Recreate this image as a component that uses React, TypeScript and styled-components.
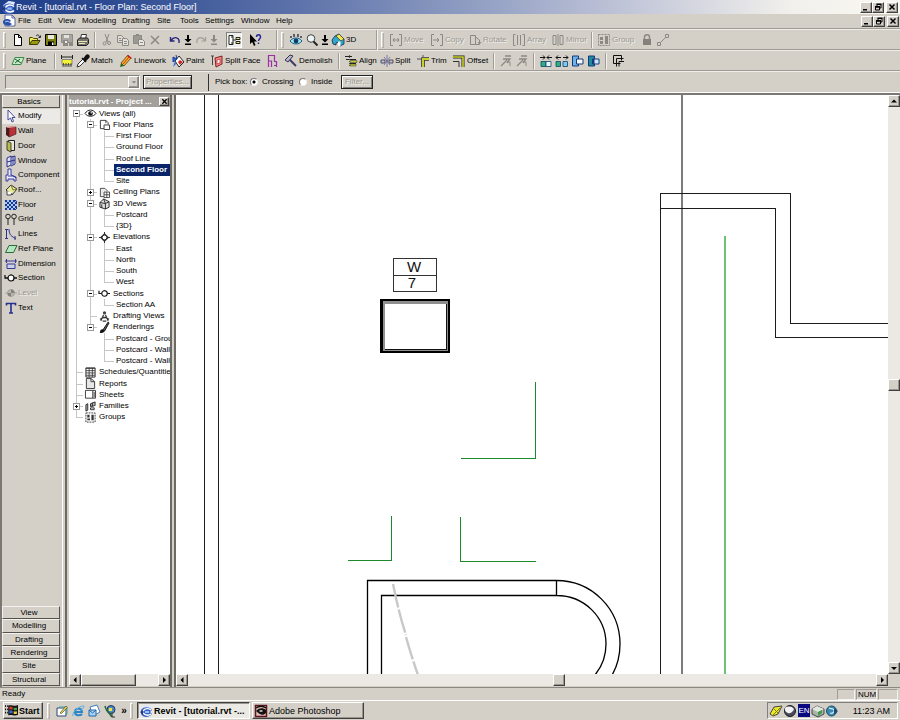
import React from "react";
import styled, { createGlobalStyle, css } from "styled-components";

const Global = createGlobalStyle`
  * { box-sizing: border-box; }
  html, body, #root { height: 100%; }
  body { margin: 0; overflow: hidden; background: #d4d0c8; }
  body, button, input, select {
    font-family: "Liberation Sans", Arial, sans-serif;
    font-size: 8px;
    line-height: 10px;
    color: #000;
  }
  button { border: 0; padding: 0; margin: 0; background: none; white-space: nowrap; }
  ul { list-style: none; margin: 0; padding: 0; }
`;

const raised = css`
  background: #d4d0c8;
  border: 1px solid;
  border-color: #fff #404040 #404040 #fff;
  box-shadow: inset -1px -1px 0 #9a968e;
`;

const sunken = css`
  border: 1px solid;
  border-color: #808080 #fff #fff #808080;
`;

/* ---------- icons ---------- */

const Glyph = styled.svg<{ $s: number }>`
  flex: none;
  display: block;
  width: ${(p) => p.$s}px;
  height: ${(p) => p.$s}px;
  overflow: visible;
`;

const G = "#8c8984";

const drawings: Record<string, React.ReactNode> = {
  revit: (
    <>
      <path d="M1 4 6 0l6 1-1 3-5-1-3 3z" fill="#dfe9fb" />
      <path d="M1 5c3-4 9-3 11 0l-2 2 2 2c-3 4-9 4-11 0z" fill="#3f63c8" />
      <path d="M3 6c2-3 6-3 8-1M3 8c2 2 5 3 8 1" stroke="#fff" strokeWidth="1.4" fill="none" />
      <path d="M5 6h4v2H5z" fill="#8ec5f4" />
      <path d="M0 7 3 5v5z" fill="#26357e" />
    </>
  ),
  doc: (
    <>
      <path d="M2 0h7l3 3v8H2z" fill="#fff" stroke="#55659a" />
      <path d="M9 0v3h3" fill="none" stroke="#55659a" />
      <path d="M0 6c3-3 7-2 8 0L6 7l3 2c-3 3-7 2-9-1z" fill="#2c50a8" />
      <path d="M2 7c1-1 3-1 4 0" stroke="#a8d4fa" fill="none" />
    </>
  ),
  new: <path d="M2.500.500h4l3 3v8h-7zM6.500.500v3h3" fill="#fff" stroke="#000" />,
  open: (
    <>
      <path d="M.5 10.500v-7h3l1 1h4v2" fill="#f2ec52" stroke="#4a4a00" />
      <path d="m.5 10.500 2.500-4h8l-2.500 4z" fill="#9a9a12" stroke="#3c3c00" />
      <path d="M7 2c1-1.500 3-1.500 3.500 1M11.500 1.500v2h-2" fill="none" stroke="#222" />
    </>
  ),
  save: (
    <>
      <path d="M.5.5h11v11h-11z" fill="#7c8010" stroke="#000" />
      <path d="M3 1h6v4H3z" fill="#e8e8e0" />
      <path d="M3 7.500h6v4H3z" fill="#000" />
      <path d="M7 8.500h1.500v2.500H7z" fill="#fff" />
    </>
  ),
  saveAll: (
    <>
      <path d="M.5.5h11v8h-11z" fill="#a9a6a1" stroke={G} />
      <path d="M3 1h5v3H3z" fill="#e4e2dd" />
      <path d="M2 6h5v6H2zM8 8h4v4H8z" fill={G} />
      <path d="M4 7h2v2H4z" fill="#eee" />
    </>
  ),
  print: (
    <>
      <path d="m3.500 4.500 1-4h5l-1 4" fill="#fff" stroke="#333" />
      <path d="m.5 6 2-2h8l1 1.500v4l-2 2h-9z" fill="#77746e" stroke="#222" />
      <path d="M1 7.500h9M2 9.500h6" stroke="#e7e4b6" />
    </>
  ),
  cut: (
    <path d="m4 0 3 8M8 0 5 8M3.500 8a1.500 1.500 0 1 0 .1 3 1.500 1.500 0 0 0 0-3zM8 7.500a1.500 1.500 0 1 0 .1 3 1.500 1.500 0 0 0 0-3z" fill="none" stroke={G} />
  ),
  copy: (
    <>
      <path d="M.5 1.500h4l2 2v5h-6z" fill="#dedbd5" stroke={G} />
      <path d="M5.500 4.500h4l2 2v5h-6zM7 7.500h3M7 9.500h3M2 4.500h2M2 6.500h3" fill="#e4e2dc" stroke={G} />
    </>
  ),
  paste: (
    <>
      <path d="M.5 1.500h8v8h-8z" fill="#9c9993" stroke={G} />
      <path d="M3 0h3v2H3z" fill={G} />
      <path d="M5.500 5.500h4l2 2v4h-6zM7 8.500h3" fill="#e8e6e1" stroke={G} />
    </>
  ),
  cross: <path d="m2 2 8 8M10 2l-8 8" stroke={G} strokeWidth="1.500" />,
  undo: <path d="M1.500 3v4h4M2 6.500C5 2 11 3 10 9" fill="none" stroke="#26267c" strokeWidth="1.400" />,
  redo: <path d="M10.500 3v4h-4M10 6.500C7 2 1 3 2 9" fill="none" stroke="#a09d98" strokeWidth="1.200" />,
  down: <path d="M5 1h2v4h2.500L6 8.500 2.500 5H5zM3 9.500h6V11H3z" fill="#000" />,
  downOff: <path d="M5 1h2v4h2.500L6 8.500 2.500 5H5zM3 9.500h6V11H3z" fill={G} />,
  browser: (
    <>
      <path d="M1 1.500h4v9H1z" fill="#fff" stroke="#222" />
      <path d="M5 6h3M3 3h2M3 9h2" stroke="#222" />
      <path d="M8 3.500h4v2H8zM8 7.500h4v2H8z" fill="#e5e884" stroke="#222" />
    </>
  ),
  help: (
    <>
      <path d="M1 0v10l2.200-2L5 12l1.500-1L5 7.500h3z" fill="#000" />
      <path d="M7.500 3c0-3 4-3 4 0 0 2-2 2-2 4M9.500 8.500v1.500" fill="none" stroke="#28289a" strokeWidth="1.500" />
    </>
  ),
  eye: (
    <>
      <path d="M0 7c3-4 9-4 12 0-3 4-9 4-12 0z" fill="#a8e0ee" stroke="#146083" />
      <circle cx="6" cy="7" r="2.400" fill="#0c3d68" />
      <path d="M1 2v2M4 0v3M8 0v3M11 2v2" stroke="#113" strokeWidth="1.200" />
    </>
  ),
  zoom: (
    <>
      <circle cx="5" cy="4.500" r="3.800" fill="#e8f4f6" stroke="#444" />
      <path d="m7.500 7.500 4 4" stroke="#222" strokeWidth="2" />
    </>
  ),
  house: (
    <>
      <path d="m0 6 3-4 4-2 5 5v5l-4 2-1-4-3 1v2l-3-1z" fill="#32a7c9" stroke="#124" strokeWidth=".8" />
      <path d="m4 2 3-2 5 5-3 2z" fill="#f2e94e" stroke="#333" strokeWidth=".7" />
      <path d="M6 7.500h2.500V12H6z" fill="#fff" />
    </>
  ),
  move: <path d="M3 .500H.500v11H3M9 .500h2.500v11H9M3 6h6M4.500 4 3 6l1.500 2M7.500 4 9 6 7.500 8" fill="none" stroke={G} />,
  copyEl: <path d="M3 .500H.500v11H3M9 .500h2.500v11H9M2 6h6M6 4l2 2-2 2" fill="none" stroke={G} />,
  rotate: <path d="M1.500 1.500h5v9h-5zM6.500 3l4 3v4.500h-9M9 8l1.500 2L12 8" fill="none" stroke={G} />,
  array: <path d="M2.500.500H.500v11h2M4.500 1v10M7.500 1v10M9.500.500h2v11h-2" fill="none" stroke={G} />,
  mirror: <path d="M1 1.500h3v9H1zM8 1.500h3v9H8zM6 0v12" fill="none" stroke={G} />,
  group: (
    <>
      <path d="M.500.500h11v11h-11z" fill="none" stroke={G} strokeDasharray="2 1" />
      <path d="M2 3h3v3H2zM2 7h3v3H2zM7 2h3v8H7z" fill={G} />
    </>
  ),
  lock: (
    <>
      <path d="M3.500 6V3c0-3 5-3 5 0v3" fill="none" stroke={G} strokeWidth="1.500" />
      <path d="M2 5h8v6H2z" fill="#85827d" />
    </>
  ),
  link: <path d="M.500 8.500h3v3h-3zM8.500.500h3v3h-3zM3.500 8.500 6 6l2.500-2.500" fill="none" stroke={G} />,
  plane: (
    <>
      <path d="M3 2.500h9l-3 7H0z" fill="#c4ecc9" stroke="#3d8a4b" />
      <path d="m3 4 6 4M8 4 3 8" stroke="#1c5a2c" />
    </>
  ),
  tape: (
    <>
      <path d="M1 4.500h10v5H1z" fill="#f3f13a" stroke="#666" strokeWidth=".7" />
      <path d="M.500 0v4M11.500 0v4M1 2h10" stroke="#222" fill="none" />
      <path d="M2.500 8v2.500M5 8v2.500M7.500 8v2.500M10 8v2.500M1 11h10" stroke="#333" strokeWidth=".8" />
    </>
  ),
  dropper: (
    <>
      <path d="m0 12 1-3 5-5 2 2-5 5z" fill="#fff" stroke="#333" />
      <path d="m5 3 4 4M7 4l2-3c2-2 4 0 2 2L9 5z" stroke="#111" strokeWidth="1.600" fill="#111" />
    </>
  ),
  pencil: (
    <>
      <path d="m1 8 7-8 3 3-7 8z" fill="#e9b42a" stroke="#6a3208" strokeWidth=".8" />
      <path d="m7 1 1-1 4 3-1 1z" fill="#c81e1e" />
      <path d="m1 8 3 3-4 1z" fill="#1b6b2a" />
      <path d="m3 9 6-7" stroke="#d2321a" />
    </>
  ),
  paint: (
    <>
      <path d="m3 6 4-5 5 6-5 5z" fill="#fff" stroke="#222" />
      <path d="M3 6 1 12l3-3z" fill="#2f6ad0" />
      <path d="M5 4 4 0M1 2l4 2-4 3z" stroke="#1f3a9a" fill="#2f6ad0" />
      <path d="m6 7 2-2 3 2-3 3z" fill="#cf2b2b" />
    </>
  ),
  splitFace: (
    <>
      <path d="m4 3 7-2v8l-6 3z" fill="#e88b8b" stroke="#8c1c1c" />
      <path d="M1.500 1v9M0 1h3" stroke="#444" />
      <path d="m6 5 3-1v4L6 9z" fill="#fff" stroke="#c33" strokeWidth=".8" />
    </>
  ),
  profile: <path d="M2.500 12V.500h6v6h2V12M2.500 6h3v6M8 10.500h3" fill="none" stroke="#9b2fa4" strokeWidth="1.200" />,
  hammer: (
    <>
      <path d="m4 4 7 7" stroke="#3b3b6a" strokeWidth="2" />
      <path d="M0 5 5 0l3 1-5 6z" fill="#b7b7d3" stroke="#334" />
    </>
  ),
  align: (
    <>
      <path d="M0 1.500h7M1 4.500h10M4 8.500h7" stroke="#222" />
      <path d="M5 5.500h7v2H5zM5 9h6v2H5z" fill="#c3c82c" stroke="#333" strokeWidth=".5" />
      <path d="M4.500 0v12" stroke="#555" strokeDasharray="1 1" />
    </>
  ),
  split: (
    <>
      <path d="M0 5h4v3H0zM8 5h4v3H8z" fill="#c4c0d8" stroke="#334" strokeWidth=".8" />
      <path d="M6 0v12M3 2l6 8M9 2l-6 8" stroke="#66649a" strokeWidth=".8" />
    </>
  ),
  trim: (
    <>
      <path d="M6 12V4h6" fill="none" stroke="#333" strokeWidth="3.600" />
      <path d="M6 12V4h6" fill="none" stroke="#c9d02a" strokeWidth="2" />
      <path d="M0 4h4M6 0v2" stroke="#556" />
    </>
  ),
  offset: (
    <>
      <path d="M0 2h10v10" fill="none" stroke="#222" strokeWidth="3" />
      <path d="M0 2h10v10" fill="none" stroke="#cdd32b" strokeWidth="1.600" />
      <path d="M0 6.500h6V12" fill="none" stroke="#333" />
    </>
  ),
  tool: (
    <>
      <path d="M1 11 7 5M5 1h6M3 4h7L7 8" stroke={G} strokeWidth="1.300" fill="none" />
      <path d="M7 7h3v4" stroke={G} fill="none" />
    </>
  ),
  joinA: (
    <>
      <path d="M0 2.500h5M7 2.500h5M3 .500l2 2-2 2M9 .500l-2 2 2 2" stroke="#111" fill="none" />
      <path d="M1 6.500h5v5H1z" fill="#2fae83" stroke="#146" strokeWidth=".8" />
      <path d="M6 6.500h5v5H6z" fill="#eaf6ff" stroke="#146" strokeWidth=".8" />
    </>
  ),
  joinB: (
    <>
      <path d="M0 2.500h5M7 2.500h5M2 .500l-2 2 2 2M10 .500l2 2-2 2" stroke="#111" fill="none" />
      <path d="M0 6.500h4.500v5H0z" fill="#2fae83" stroke="#146" strokeWidth=".8" />
      <path d="M7 6.500h4.500v5H7z" fill="#7fc7f4" stroke="#146" strokeWidth=".8" />
    </>
  ),
  cutA: (
    <>
      <path d="M.500 1h6v10h-6z" fill="#6fb4e8" stroke="#123a7c" />
      <path d="M4.500 4H11v5H4.500z" fill="#f4f8fc" stroke="#123a7c" />
    </>
  ),
  cutB: (
    <>
      <path d="M.500 1h6v10h-6z" fill="#1f8a9a" stroke="#123a7c" />
      <path d="M4.500 4H11v5H4.500z" fill="#cfe6fa" stroke="#123a7c" />
      <path d="M4.500 4h2v5h-2z" fill="#123a7c" />
    </>
  ),
  layers: <path d="M8.500 8.500h-7v-8h8v5M4.500 11.500v-8h7M7 11.500V6.500h5" fill="none" stroke="#111" />,
  arrow: <path d="M3 0v10l2.500-2 1.500 4 1.500-.700L7 7.500h3z" fill="#fff" stroke="#333a94" strokeWidth=".9" />,
  wall: (
    <>
      <path d="m1 2 3 1v9L1 10z" fill="#4b1a20" />
      <path d="m4 3 7-1v7l-7 3z" fill="#b8323a" stroke="#4b1a20" strokeWidth=".7" />
      <path d="m1 2 6-1 4 1-7 1z" fill="#e28888" />
    </>
  ),
  door: (
    <>
      <path d="M3.500.500h6v10h-6z" fill="#e9e7e0" stroke="#222" />
      <path d="m2 1 4 2v9l-4-2z" fill="#b9bd40" stroke="#222" strokeWidth=".8" />
    </>
  ),
  window: <path d="m2 3 4-2v9l-4 2zM6 2l4-1v8l-4 2M2 7l8-2M8 1.500v8" fill="#dfe3fa" stroke="#2b2f86" />,
  component: (
    <>
      <path d="M3 0h3v6l5 2v4H9v-2H3v2H1V6h2z" fill="#eef" stroke="#34389a" />
      <path d="M3 7h5l3 2" fill="none" stroke="#34389a" />
    </>
  ),
  roof: (
    <>
      <path d="m1 6 5-5 6 4-5 6z" fill="#e8e9a0" stroke="#333" />
      <path d="M2 7v4h4l1-2" fill="#fff" stroke="#444" />
      <path d="m6 1 2 5 4-1" fill="none" stroke="#7b7b22" />
    </>
  ),
  floor: (
    <>
      <path d="M0 1h12v10H0z" fill="#173a91" />
      <path d="m0 5 4-4M0 9l8-8M2 11 12 1M6 11l6-6M0 7l4 4M0 3l8 8M2 1l10 10M6 1l6 6" stroke="#a9c8f8" />
    </>
  ),
  grid: (
    <>
      <circle cx="3" cy="3.500" r="2.300" fill="none" stroke="#222" />
      <circle cx="9" cy="3.500" r="2.300" fill="none" stroke="#222" />
      <path d="M3 6v6M9 6v6" stroke="#222" />
    </>
  ),
  lines: <path d="M1.500 1v10M0 1.500h3M0 10.500h3M4 1c0 6 3 8 7 9.500M10 8v4" fill="none" stroke="#2f338c" />,
  refPlane: <path d="M4 2.500h8l-3.500 7H.500z" fill="#b2e6bc" stroke="#2b6b3a" />,
  dimension: (
    <>
      <path d="M0 3h12M1.500 1v4M10.500 1v4" stroke="#333a94" />
      <path d="M2 6h8v4.500H2z" fill="#cfd1ec" stroke="#333a94" />
    </>
  ),
  section: (
    <>
      <path d="M0 3v3h3M9 6h3" fill="none" stroke="#111" strokeWidth="1.300" />
      <path d="m2 6 4-4 4 4z" fill="#444" />
      <circle cx="6" cy="6" r="3" fill="#fff" stroke="#111" strokeWidth="1.200" />
    </>
  ),
  level: (
    <>
      <path d="M0 6h3M9 6h3" stroke="#a7a49f" />
      <circle cx="6" cy="6" r="3.500" fill="#bab7b2" stroke="#a7a49f" />
      <path d="M6 2.500V6h3.500A3.500 3.500 0 0 0 6 2.500zM6 9.500V6H2.500A3.500 3.500 0 0 0 6 9.500z" fill="#85827d" />
    </>
  ),
  text: <path d="M1.500 3.500v-2h9v2M6 1.500v9.500M4 11h4" fill="none" stroke="#26308f" strokeWidth="1.600" />,
  views: (
    <>
      <path d="M0 6c3-5 9-5 12 0-3 4-9 4-12 0z" fill="#fff" stroke="#111" />
      <circle cx="6" cy="6" r="2.500" fill="#111" />
      <circle cx="6.800" cy="5.200" r=".8" fill="#fff" />
    </>
  ),
  plan: <path d="M5.500 10.500H1.500v-9h6v3M5.500 6.500h6v5h-6zM7.500 1.500 10 4v2" fill="none" stroke="#333" />,
  ceiling: (
    <>
      <path d="M1.500 10.500v-9h5l3 3" fill="#eee" stroke="#444" />
      <path d="M5.500 5.500h6v6h-6zM5.500 8.500h6M8.500 5.500v6M1.500 10.500h4" fill="none" stroke="#444" />
    </>
  ),
  home3d: (
    <>
      <path d="m1 5 4-4 6 3v6l-4 2-6-2z" fill="#ddd" stroke="#222" />
      <path d="m5 1 2 5 4-2M7 6v6M1 5l6 1M3 7v4" stroke="#222" fill="none" />
    </>
  ),
  elevation: (
    <>
      <path d="M6 0v12M0 6h12" stroke="#222" />
      <path d="m6 1 5 5-5 5-5-5z" fill="#333" />
      <circle cx="6" cy="6" r="2.600" fill="#fff" stroke="#222" />
    </>
  ),
  drafting: (
    <>
      <circle cx="6" cy="2" r="1.800" fill="#444" />
      <path d="M5 4 2 11M7 4l3 7M3 7h6M1 9c3-2 7-2 10 0M4 11h4" fill="none" stroke="#333" strokeWidth="1.200" />
    </>
  ),
  brush: (
    <>
      <path d="m4 9 6-9 1 1-5 9z" fill="#555" stroke="#111" />
      <path d="M1 12c0-3 1-4 3-4l2 2c-1 2-3 2-5 2z" fill="#111" />
    </>
  ),
  schedule: (
    <>
      <path d="M1 1h10v10H1z" fill="#fff" stroke="#222" />
      <path d="M1 1.500h10M1 4h10M1 6.500h10M1 9h10M4.500 1v10M8 1v10" stroke="#333" strokeWidth=".9" />
    </>
  ),
  report: <path d="M1.500.500h5l4 3.500v7.500h-9zM6.500.500V4h4" fill="#e6e6e6" stroke="#333" />,
  sheet: <path d="M.500 1.500h11v8.500H.500zM8.500 1.500V10M10 3v6" fill="#fff" stroke="#333" />,
  family: (
    <>
      <path d="m1 4 2-1v7l-2 1zM6 3l5-2v4L6 6z" fill="#bbb" stroke="#222" />
      <path d="M6 7.500h4v2H6zM8 2v4" fill="#fff" stroke="#222" />
    </>
  ),
  groups: (
    <>
      <path d="M1 1h10v10H1z" fill="none" stroke="#333" strokeDasharray="2 1" />
      <path d="M2.500 3h2.500v3H2.500zM2.500 7h3v2h-3zM7 3h2.500v6H7z" fill="#333" />
    </>
  ),
  flag: (
    <>
      <path d="M0 2h3M0 5h3M0 8h3" stroke="#111" strokeDasharray="1 1" strokeWidth="1.500" />
      <path d="M3 1.500C5 0 9 3 12 1v9c-3 2-6-1-9 .500z" fill="#111" />
      <path d="M4 2.500c1-.500 2 0 3 .500v2.200C6 5 5 4.500 4 5z" fill="#e33a2c" />
      <path d="M8 3.200c1 .300 2 .300 3 0v2.300c-1 .300-2 .300-3 0z" fill="#3aa84a" />
      <path d="M4 6c1-.500 2 0 3 .500v2.400c-1-.500-2-.500-3 0z" fill="#3567d6" />
      <path d="M8 6.800c1 .300 2 .300 3 0v2.300c-1 .300-2 .300-3 0z" fill="#f0cf2f" />
    </>
  ),
  desktop: (
    <>
      <path d="M1 3h9v8H1z" fill="#fff" stroke="#347" />
      <path d="M3 2h8v7H9" fill="none" stroke="#49a3a0" />
      <path d="m4 8 6-7 1.500 1.500-6 6z" fill="#e4d05a" stroke="#552" strokeWidth=".7" />
    </>
  ),
  ie: (
    <>
      <path d="M10 7H3c0-4 6-5 7 0zM3 7c0 4 5 4 7 2" fill="none" stroke="#2a86c9" strokeWidth="2" />
      <path d="M1 11C-1 8 8 0 12 1c0 2-2 3-4 5" fill="none" stroke="#58b2e4" />
    </>
  ),
  mail: (
    <>
      <path d="M2 2 9 0l3 7-7 4z" fill="#fff" stroke="#3b7fc4" />
      <path d="M1 5h7v6H1z" fill="#a8d4f4" stroke="#2a65aa" />
      <path d="m1 5 3.500 3L8 5" fill="none" stroke="#2a65aa" />
    </>
  ),
  media: (
    <>
      <circle cx="7" cy="4.500" r="4" fill="#4a8ac8" stroke="#235" />
      <path d="M5 3h3v3H5z" fill="#f4e13a" />
      <path d="M1 1c1 3 1 5 4 7M5 8l3 4" stroke="#2a6a3a" strokeWidth="1.600" fill="none" />
      <path d="M8 8v4h3" fill="none" stroke="#333" />
    </>
  ),
  photoshop: (
    <>
      <path d="M.500.500h11v11H.500z" fill="#e2bcb4" stroke="#5c1420" strokeWidth="1.500" />
      <path d="M1 6c2-3 7-4 10-1v3c-3 3-6 2-10-2z" fill="#111" />
      <path d="M4 6c1-1 3-1 4 0-1 1-3 1-4 0z" fill="#fff" />
      <path d="M1 3c3-2 7-2 10 0" stroke="#111" strokeWidth="1.500" fill="none" />
    </>
  ),
  wand: (
    <>
      <path d="m0 9 4-7 8-1-4 8-5 2z" fill="#f0e92a" stroke="#444" />
      <path d="m2 11 8-8M4 4l4 4" stroke="#7a7a12" />
    </>
  ),
  ball: (
    <>
      <circle cx="6" cy="6" r="5.500" fill="#4a4a5c" stroke="#222" />
      <path d="M2 2c3-1 6-1 8 2-1 3-4 5-6 4-3-1-4-4-2-6z" fill="#f2f2f8" />
    </>
  ),
  box: (
    <>
      <path d="m0 4 5-3 7 3v5l-6 3-6-3z" fill="#a9b5a6" stroke="#445" />
      <path d="m0 4 6 3 6-3-7-3z" fill="#dfe9dd" />
      <path d="m6 7 4-2v3l-4 3z" fill="#3f9b4a" />
    </>
  ),
  globe: (
    <>
      <circle cx="5.500" cy="6" r="5" fill="#3d88ae" stroke="#134a68" />
      <path d="M3 3c2 1 4 0 5 2s-2 4-4 3" fill="none" stroke="#c6ecf8" strokeWidth="1.300" />
      <path d="m8 3 4 3-4 4z" fill="#1d4a78" />
    </>
  ),
};

const Icon = ({ name, size = 12 }: { name: string; size?: number }) => (
  <Glyph viewBox="0 0 12 12" $s={size} aria-hidden="true">
    {drawings[name]}
  </Glyph>
);

/* ---------- window frame ---------- */

const Desktop = styled.div`
  display: flex;
  flex-direction: column;
  height: 100vh;
  background: #d4d0c8;
`;

const TitleBar = styled.header`
  display: flex;
  align-items: center;
  flex: none;
  height: 14px;
  padding: 0 2px;
  gap: 1px;
  color: #fff;
  background: linear-gradient(90deg, #203f8a 0%, #2d4b92 12%, #5a70a8 32%, #8f9dc2 52%, #bcc1d6 68%, #f2f0ec 88%, #faf8f2 100%);
`;

const Title = styled.h1`
  flex: 1;
  margin: 0;
  font-size: 9px;
  line-height: 12px;
  font-weight: 400;
`;

const Caption = styled.div`
  display: flex;
  margin-left: auto;
`;

const CaptionButton = styled.button<{ $apart?: boolean }>`
  ${raised}
  display: grid;
  place-items: center;
  width: 12px;
  height: 11px;
  margin-left: ${(p) => (p.$apart ? 2 : 0)}px;
`;

const WindowButtons = ({ scope }: { scope: string }) => (
  <Caption>
    <CaptionButton aria-label={`Minimize ${scope}`}>
      <Glyph viewBox="0 0 8 8" $s={8}><path d="M1 6h4v1.500H1z" /></Glyph>
    </CaptionButton>
    <CaptionButton aria-label={`Restore ${scope}`}>
      <Glyph viewBox="0 0 8 8" $s={8}>
        <path d="M3 3V1.500h4V5H5.500M1.500 4h4v3h-4z" fill="none" stroke="#000" />
        <path d="M2.500.500h5v1.500h-5zM1 3h5v1.500H1z" />
      </Glyph>
    </CaptionButton>
    <CaptionButton $apart aria-label={`Close ${scope}`}>
      <Glyph viewBox="0 0 8 8" $s={8}><path d="m1.500 1.500 5 5M6.500 1.500l-5 5" stroke="#000" strokeWidth="1.500" /></Glyph>
    </CaptionButton>
  </Caption>
);

const MenuBar = styled.nav`
  display: flex;
  align-items: center;
  flex: none;
  height: 15px;
  padding: 0 1px 0 3px;
  border-bottom: 1px solid #a09c95;
`;

const MenuItem = styled.button<{ $w: number }>`
  width: ${(p) => p.$w}px;
  text-align: left;
`;

const MenuIcon = styled.span`
  width: 15px;
`;

const Toolbar = styled.div`
  display: flex;
  align-items: center;
  flex: none;
  height: 21px;
  padding-left: 3px;
  border-top: 1px solid #efede8;
  border-bottom: 1px solid #a09c95;
`;

const Grip = styled.span`
  flex: none;
  width: 3px;
  height: 16px;
  margin-right: 4px;
  border: 1px solid;
  border-color: #fff #b4b0a8 #b4b0a8 #fff;
`;

const Divider = styled.span<{ $end?: boolean }>`
  flex: none;
  width: 2px;
  height: ${(p) => (p.$end ? 20 : 16)}px;
  margin: 0 3px;
  border-left: 1px solid #a09c95;
  border-right: 1px solid #f4f2ee;
`;

const ToolButton = styled.button<{ $w: number; $pressed?: boolean }>`
  display: flex;
  align-items: center;
  flex: none;
  gap: 2px;
  width: ${(p) => p.$w}px;
  height: 16px;
  padding: 0 2px;
  &:disabled { color: #9a9791; text-shadow: 1px 1px 0 #f2f0ec; }
  ${(p) => p.$pressed && css`
    ${sunken}
    padding: 0 1px;
    background: #efeeea;
  `}
`;

type Tool = { icon?: string; label?: string; name?: string; w: number; off?: boolean; pressed?: boolean; kind?: "divider" | "end" | "grip" | "gap" };

const Gap = styled.span<{ $w: number }>`
  flex: none;
  width: ${(p) => p.$w}px;
`;

const standardTools: Tool[] = [
  { kind: "grip", w: 0 },
  { icon: "new", name: "New", w: 17 }, { icon: "open", name: "Open", w: 16 }, { icon: "save", name: "Save", w: 16 },
  { icon: "saveAll", name: "Save to central", w: 16, off: true }, { icon: "print", name: "Print", w: 16 },
  { kind: "divider", w: 0 },
  { icon: "cut", name: "Cut", w: 16, off: true }, { icon: "copy", name: "Copy to clipboard", w: 16, off: true },
  { icon: "paste", name: "Paste", w: 16, off: true }, { icon: "cross", name: "Delete", w: 16, off: true },
  { kind: "gap", w: 4 },
  { icon: "undo", name: "Undo", w: 13 }, { icon: "down", name: "Undo list", w: 13 },
  { icon: "redo", name: "Redo", w: 13, off: true }, { icon: "downOff", name: "Redo list", w: 14, off: true },
  { kind: "gap", w: 6 },
  { icon: "browser", name: "Project browser", w: 16, pressed: true },
  { kind: "gap", w: 5 },
  { icon: "help", name: "What's this", w: 23 },
  { kind: "gap", w: 3 },
  { kind: "end", w: 0 }, { kind: "grip", w: 0 },
  { icon: "eye", name: "View", w: 16 }, { icon: "zoom", name: "Zoom", w: 13 }, { icon: "down", name: "Zoom list", w: 13 },
  { icon: "house", label: "3D", w: 34 },
  { kind: "gap", w: 9 },
  { kind: "end", w: 0 }, { kind: "grip", w: 0 },
  { icon: "move", label: "Move", w: 41, off: true }, { icon: "copyEl", label: "Copy", w: 38, off: true },
  { icon: "rotate", label: "Rotate", w: 44, off: true }, { icon: "array", label: "Array", w: 39, off: true },
  { icon: "mirror", label: "Mirror", w: 38, off: true },
  { kind: "divider", w: 0 },
  { icon: "group", label: "Group", w: 43, off: true }, { icon: "lock", name: "Lock", w: 16, off: true },
  { icon: "link", name: "Link", w: 16, off: true },
];

const editTools: Tool[] = [
  { kind: "grip", w: 0 },
  { icon: "plane", label: "Plane", w: 41 },
  { kind: "divider", w: 0 },
  { icon: "tape", name: "Measure", w: 16 }, { icon: "dropper", label: "Match", w: 43 },
  { icon: "pencil", label: "Linework", w: 52 }, { icon: "paint", label: "Paint", w: 39 },
  { icon: "splitFace", label: "Split Face", w: 55 }, { icon: "profile", name: "Edit profile", w: 19 },
  { icon: "hammer", label: "Demolish", w: 52 },
  { kind: "divider", w: 0 },
  { icon: "align", label: "Align", w: 36 }, { icon: "split", label: "Split", w: 36 },
  { icon: "trim", label: "Trim", w: 36 }, { icon: "offset", label: "Offset", w: 39 },
  { kind: "divider", w: 0 },
  { icon: "tool", name: "Attach", w: 16, off: true }, { icon: "tool", name: "Detach", w: 16, off: true },
  { kind: "divider", w: 0 },
  { icon: "joinA", name: "Join", w: 16 }, { icon: "joinB", name: "Unjoin", w: 16 },
  { icon: "cutA", name: "Cut geometry", w: 16 }, { icon: "cutB", name: "Uncut geometry", w: 16 },
  { kind: "divider", w: 0 },
  { icon: "layers", name: "Join roofs", w: 16 },
];

const Tools = ({ label, items }: { label: string; items: Tool[] }) => (
  <Toolbar role="toolbar" aria-label={label}>
    {items.map((t, i) => {
      if (t.kind === "grip") return <Grip key={i} />;
      if (t.kind === "divider") return <Divider key={i} />;
      if (t.kind === "end") return <Divider key={i} $end />;
      if (t.kind === "gap") return <Gap key={i} $w={t.w} />;
      return (
        <ToolButton key={i} $w={t.w} $pressed={t.pressed} disabled={t.off} aria-label={t.label ? undefined : t.name}>
          {t.icon && <Icon name={t.icon} />}
          {t.label}
        </ToolButton>
      );
    })}
  </Toolbar>
);

const OptionsBar = styled.form`
  display: flex;
  align-items: center;
  flex: none;
  height: 22px;
  padding: 0 5px;
  border-top: 1px solid #efede8;
  border-bottom: 1px solid #fff;
`;

const Combo = styled.div`
  ${sunken}
  display: flex;
  width: 135px;
  height: 14px;
`;

const ComboSelect = styled.select`
  flex: 1;
  min-width: 0;
  appearance: none;
  border: 0;
  padding: 0;
  background: #d4d0c8;
`;

const ComboArrow = styled.span`
  ${raised}
  border-color: #fff #808080 #808080 #fff;
  display: grid;
  place-items: center;
  width: 11px;
`;

const PushButton = styled.button<{ $w: number }>`
  width: ${(p) => p.$w}px;
  height: 14px;
  border: 1px solid #222;
  box-shadow: inset 1px 1px 0 #fff, inset -1px -1px 0 #808080;
  &:disabled { color: #9a9791; text-shadow: 1px 1px 0 #f2f0ec; }
`;

const OptionDivider = styled.span`
  width: 1px;
  height: 17px;
  margin: 0 6px 0 16px;
  background: #333;
`;

const RadioLabel = styled.label<{ $w: number }>`
  display: flex;
  align-items: center;
  gap: 4px;
  width: ${(p) => p.$w}px;
`;

const Radio = styled.input`
  appearance: none;
  flex: none;
  width: 8px;
  height: 8px;
  margin: 0;
  border: 1px solid;
  border-color: #777 #eee #eee #777;
  border-radius: 50%;
  background: #fff;
  &:checked { background: radial-gradient(circle, #000 0 1px, #fff 2px); }
`;

const PickLabel = styled.span`
  width: 35px;
`;

/* ---------- work area ---------- */

const Work = styled.main`
  display: flex;
  flex: 1;
  min-height: 0;
  border-top: 2px solid #7c7974;
`;

const DesignBar = styled.aside`
  display: flex;
  flex-direction: column;
  flex: none;
  width: 63px;
  padding: 0 2px 1px 0;
  border-left: 2px solid #7c7974;
  border-right: 1px solid #fff;
`;

const DesignTab = styled.button`
  ${raised}
  border-color: #f4f2ee #55524d #55524d #f4f2ee;
  box-shadow: none;
  flex: none;
  height: 13px;
  padding-right: 4px;
  line-height: 11px;
`;

const DesignList = styled.div`
  display: flex;
  flex-direction: column;
  flex: none;
  height: 206px;
  margin-top: 1px;
  margin-bottom: auto;
`;

const DesignItem = styled.button<{ $on?: boolean }>`
  display: flex;
  flex: 1;
  align-items: center;
  gap: 1px;
  padding-left: 3px;
  background: ${(p) => (p.$on ? "#eceae6" : "transparent")};
  &:disabled { color: #9a9791; text-shadow: 1px 1px 0 #f2f0ec; }
`;

const TabStack = styled.div`
  display: grid;
  grid-auto-rows: 1fr;
  flex: none;
  height: 80px;
`;

const StackTab = styled(DesignTab)`
  height: auto;
`;

const Browser = styled.aside`
  display: flex;
  flex-direction: column;
  flex: none;
  width: 109px;
  margin-left: 2px;
  padding-left: 2px;
  padding-right: 2px;
  background: #d4d0c8;
  border-left: 2px solid #6d6a65;
`;

const BrowserBody = styled.div`
  display: flex;
  flex-direction: column;
  flex: 1;
  min-height: 0;
  padding-bottom: 1px;
  border-right: 2px solid #6d6a65;
`;

const BrowserTitle = styled.div`
  display: flex;
  align-items: center;
  flex: none;
  height: 12px;
  padding-right: 1px;
  background: #a3a09b;
`;

const BrowserName = styled.h2`
  flex: 1;
  min-width: 0;
  margin: 0;
  white-space: nowrap;
  font-size: 8px;
  line-height: 11px;
  color: #fff;
`;

const CloseButton = styled.button`
  ${raised}
  display: grid;
  place-items: center;
  width: 10px;
  height: 9px;
`;

const TreePane = styled.div`
  flex: 1;
  min-height: 0;
  padding-top: 1px;
  overflow: hidden;
  background: #fff;
`;

const Tree = styled.ul`
  display: grid;
  grid-auto-rows: 1fr;
  height: 315px;
`;

const Row = styled.li`
  display: flex;
  align-items: stretch;
  min-height: 0;
  white-space: nowrap;
`;

const RowLabel = styled.span<{ $on?: boolean }>`
  display: flex;
  align-items: center;
  padding-left: 2px;
  ${(p) => p.$on && css`
    flex: 1;
    background: #0a246a;
    color: #fff;
    font-weight: 700;
  `}
`;

const Guide = styled.span<{ $kind: string; $wide?: boolean }>`
  position: relative;
  display: flex;
  align-items: center;
  flex: none;
  width: ${(p) => (p.$wide ? 17 : 14)}px;
  padding-left: 4px;
  &::before {
    content: "";
    position: absolute;
    left: 7px;
    top: ${(p) => (p.$kind === "s" ? "50%" : "0")};
    height: ${(p) => (p.$kind === "L" || p.$kind === "l" || p.$kind === "s" ? "50%" : "100%")};
    border-left: ${(p) => (p.$kind === " " ? "0" : "1px solid #c6c6c6")};
  }
  &::after {
    content: "";
    position: absolute;
    left: 7px;
    right: 0;
    top: 50%;
    border-top: ${(p) => (p.$kind === " " || p.$kind === "|" ? "0" : "1px solid #c6c6c6")};
  }
`;

const Expander = styled.button`
  position: relative;
  z-index: 1;
  width: 7px;
  height: 7px;
  border: 1px solid #999;
  background: #fff;
`;

const RowIcon = styled.span`
  display: grid;
  place-items: center;
  width: 14px;
`;

/* guide codes: | through, T branch, L last branch, -/+ expander with line, s first expander, l last expander */
type Node = { guides: string; label: string; icon?: string; on?: boolean };

const nodes: Node[] = [
  { guides: "s", icon: "views", label: "Views (all)" },
  { guides: "|-", icon: "plan", label: "Floor Plans" },
  { guides: "||T", label: "First Floor" },
  { guides: "||T", label: "Ground Floor" },
  { guides: "||T", label: "Roof Line" },
  { guides: "||T", label: "Second Floor", on: true },
  { guides: "||L", label: "Site" },
  { guides: "|+", icon: "ceiling", label: "Ceiling Plans" },
  { guides: "|-", icon: "home3d", label: "3D Views" },
  { guides: "||T", label: "Postcard" },
  { guides: "||L", label: "{3D}" },
  { guides: "|-", icon: "elevation", label: "Elevations" },
  { guides: "||T", label: "East" },
  { guides: "||T", label: "North" },
  { guides: "||T", label: "South" },
  { guides: "||L", label: "West" },
  { guides: "|-", icon: "section", label: "Sections" },
  { guides: "||L", label: "Section AA" },
  { guides: "|T", icon: "drafting", label: "Drafting Views" },
  { guides: "|l", icon: "brush", label: "Renderings" },
  { guides: "| T", label: "Postcard - Grou" },
  { guides: "| T", label: "Postcard - Wall" },
  { guides: "| L", label: "Postcard - Wall" },
  { guides: "T", icon: "schedule", label: "Schedules/Quantitie" },
  { guides: "T", icon: "report", label: "Reports" },
  { guides: "T", icon: "sheet", label: "Sheets" },
  { guides: "+", icon: "family", label: "Families" },
  { guides: "L", icon: "groups", label: "Groups" },
];

const TreeRow = ({ node }: { node: Node }) => (
  <Row role="treeitem" aria-level={node.guides.length} aria-selected={!!node.on}>
    {node.guides.split("").map((g, i) => (
      <Guide key={i} $kind={g} $wide={i === 2}>
        {"s-+l".includes(g) && (
          <Expander aria-label={`${g === "+" ? "Expand" : "Collapse"} ${node.label}`}>
            <Glyph viewBox="0 0 5 5" $s={5}>
              <path d={g === "+" ? "M1 2.500h3M2.500 1v3" : "M1 2.500h3"} stroke="#000" />
            </Glyph>
          </Expander>
        )}
      </Guide>
    ))}
    {node.icon && <RowIcon><Icon name={node.icon} size={11} /></RowIcon>}
    <RowLabel $on={node.on}>{node.label}</RowLabel>
  </Row>
);

/* ---------- scroll bars ---------- */

const ScrollH = styled.div`
  display: flex;
  flex: none;
  height: 12px;
  background: #ece9e5;
`;

const ScrollV = styled.div`
  display: flex;
  flex-direction: column;
  flex: none;
  width: 12px;
  background: #ece9e5;
`;

const ScrollButton = styled.button`
  ${raised}
  display: grid;
  place-items: center;
  flex: none;
  width: 12px;
  height: 12px;
`;

const Thumb = styled.span<{ $w?: number }>`
  ${raised}
  flex: none;
  width: ${(p) => p.$w ?? 12}px;
  height: 12px;
`;

const Spacer = styled.span<{ $grow: number }>`
  flex: ${(p) => p.$grow} 1 0;
`;

const arrows: Record<string, string> = {
  left: "M5.500 1v6l-3-3z",
  right: "M3 1v6l3-3z",
  up: "M1 5.500h6l-3-3z",
  down: "M1 3h6l-3 3z",
};

const Arrow = ({ dir }: { dir: string }) => (
  <ScrollButton aria-label={`Scroll ${dir}`}>
    <Glyph viewBox="0 0 8 8" $s={8}><path d={arrows[dir]} /></Glyph>
  </ScrollButton>
);

const ViewPane = styled.section`
  display: flex;
  flex-direction: column;
  flex: 1;
  min-width: 0;
  padding-bottom: 1px;
  border-left: 2px solid #6d6a65;
`;

const ViewRow = styled.div`
  display: flex;
  flex: 1;
  min-height: 0;
`;

const Sheet = styled.div`
  flex: 1;
  min-width: 0;
  background: #fff;
  overflow: hidden;
`;

const Drawing = styled.svg`
  display: block;
  width: 100%;
  height: 100%;
`;

const Corner = styled.span`
  width: 12px;
  background: #d4d0c8;
`;

const FloorPlan = () => (
  <Drawing role="img" aria-label="Second floor plan" shapeRendering="crispEdges">
    <g transform="translate(-176 -95)" fill="none" stroke="#1c1c1c" strokeWidth="1">
      <path d="M204.500 95V1000M218.500 95V1000" />
      <path d="M682 95V1000" stroke="#7c7c7c" strokeWidth="2" />
      <path d="M660.500 1000V193.500H790.500V323.500H1400M660.500 208.500H775.500V337.500H1400" />
      <path d="M725 236V1000" stroke="#6cc276" strokeWidth="2" />
      <path d="M535.500 382V458.500H461M391.500 516V560.500H348M460.500 517V561.500H536" stroke="#1e8a2c" />
      <path d="M393.500 258.500h43v33h-43zM393.500 275.500h43" stroke="#333" />
      <path d="M380 299h70v54h-70z" fill="#000" stroke="none" />
      <path d="M383 301h65v50h-65z" fill="#8f8f8f" stroke="none" />
      <path d="M385 304h62v46h-62z" fill="#fff" stroke="none" />
      <path d="M384.500 349.500h62V304" stroke="#111" />
      <g shapeRendering="geometricPrecision">
        <g stroke="#000" strokeWidth="1.300">
          <path d="M367.500 1000V580.500H556.500C592 580.500 620 609 620 644S592 707 556.500 707" />
          <path d="M381.500 1000V595.500H556.500C584 595.500 606 617 606 644S584 693 556.500 693M556.500 580.500v15" />
        </g>
        <path d="M393 584q6 30 13 51M406 637q5 18 12 38" stroke="#c8c8c8" strokeWidth="2.400" strokeDasharray="24 2" />
      </g>
      <g fill="#111" stroke="none" fontFamily="Liberation Sans, Arial, sans-serif" fontSize="15" textAnchor="middle">
        <text x="414" y="272">W</text>
        <text x="412" y="288">7</text>
      </g>
    </g>
  </Drawing>
);

/* ---------- status and task bars ---------- */

const StatusBar = styled.footer`
  display: flex;
  align-items: center;
  flex: none;
  height: 13px;
  border-top: 1px solid #8d8982;
  padding-right: 2px;
`;

const StatusText = styled.span`
  flex: 1;
  padding-left: 2px;
`;

const StatusCell = styled.span<{ $w: number }>`
  width: ${(p) => p.$w}px;
  height: 11px;
  padding-left: 1px;
  margin-left: 1px;
  border: 1px solid;
  border-color: #a09c95 #f4f2ee #f4f2ee #a09c95;
`;

const TaskBar = styled.footer`
  display: flex;
  align-items: center;
  flex: none;
  height: 20px;
  padding: 0 2px 0 3px;
  border-top: 1px solid #fff;
`;

const StartButton = styled.button`
  ${raised}
  display: flex;
  align-items: center;
  gap: 1px;
  width: 40px;
  height: 17px;
  padding-left: 1px;
  margin-right: 4px;
  font-size: 9px;
  font-weight: 700;
`;

const QuickButton = styled.button<{ $w?: number }>`
  display: grid;
  place-items: center;
  width: ${(p) => p.$w ?? 16}px;
  height: 16px;
  font-size: 10px;
  font-weight: 700;
`;

const TaskButton = styled.button<{ $on?: boolean; $w: number }>`
  ${raised}
  display: flex;
  align-items: center;
  gap: 2px;
  width: ${(p) => p.$w}px;
  height: 17px;
  padding-left: 2px;
  font-size: 9px;
  ${(p) => p.$on && css`
    border-color: #404040 #fff #fff #404040;
    box-shadow: inset 1px 1px 0 #9a968e;
    background: #ebe9e4;
    font-weight: 700;
    margin-right: 2px;
  `}
`;

const Tray = styled.div`
  ${sunken}
  display: flex;
  align-items: center;
  gap: 2px;
  height: 17px;
  width: 131px;
  margin-left: auto;
  padding: 0 7px 0 2px;
`;

const Language = styled.span`
  width: 12px;
  background: #0a0a80;
  color: #fff;
  font-size: 8px;
  line-height: 13px;
  text-align: center;
`;

const Clock = styled.time`
  margin-left: auto;
  font-size: 9px;
`;

const menus: [string, number][] = [
  ["File", 20], ["Edit", 20], ["View", 24], ["Modelling", 40], ["Drafting", 35],
  ["Site", 23], ["Tools", 25], ["Settings", 36], ["Window", 35], ["Help", 24],
];

const design: [string, string][] = [
  ["arrow", "Modify"], ["wall", "Wall"], ["door", "Door"], ["window", "Window"], ["component", "Component"],
  ["roof", "Roof..."], ["floor", "Floor"], ["grid", "Grid"], ["lines", "Lines"], ["refPlane", "Ref Plane"],
  ["dimension", "Dimension"], ["section", "Section"], ["level", "Level"], ["text", "Text"],
];

const stack = ["View", "Modelling", "Drafting", "Rendering", "Site", "Structural"];

export default function App() {
  return (
    <Desktop>
      <Global />
      <TitleBar>
        <Icon name="revit" size={13} />
        <Title>Revit - [tutorial.rvt - Floor Plan: Second Floor]</Title>
        <WindowButtons scope="application" />
      </TitleBar>
      <MenuBar aria-label="Main menu">
        <MenuIcon><Icon name="doc" size={12} /></MenuIcon>
        {menus.map(([m, w]) => <MenuItem key={m} $w={w}>{m}</MenuItem>)}
        <WindowButtons scope="document" />
      </MenuBar>
      <Tools label="Standard" items={standardTools} />
      <Tools label="Edit" items={editTools} />
      <OptionsBar>
        <Combo>
          <ComboSelect disabled aria-label="Type selector" />
          <ComboArrow><Glyph viewBox="0 0 8 8" $s={6}><path d={arrows.down} fill="#808080" /></Glyph></ComboArrow>
        </Combo>
        <Gap $w={3} />
        <PushButton type="button" disabled $w={49}>Properties...</PushButton>
        <OptionDivider />
        <PickLabel>Pick box:</PickLabel>
        <RadioLabel $w={49}><Radio type="radio" name="pick" defaultChecked />Crossing</RadioLabel>
        <RadioLabel $w={42}><Radio type="radio" name="pick" />Inside</RadioLabel>
        <PushButton type="button" disabled $w={32}>Filter...</PushButton>
      </OptionsBar>

      <Work>
        <DesignBar aria-label="Design bar">
          <DesignTab>Basics</DesignTab>
          <DesignList>
            {design.map(([icon, label], i) => (
              <DesignItem key={label} $on={i === 0} disabled={label === "Level"}>
                <Icon name={icon} />
                {label}
              </DesignItem>
            ))}
          </DesignList>
          <TabStack>
            {stack.map((s) => <StackTab key={s}>{s}</StackTab>)}
          </TabStack>
        </DesignBar>

        <Browser aria-label="Project browser">
          <BrowserBody>
            <BrowserTitle>
              <BrowserName>tutorial.rvt - Project ...</BrowserName>
              <CloseButton aria-label="Close project browser">
                <Glyph viewBox="0 0 8 8" $s={7}><path d="m1.500 1.500 5 5M6.500 1.500l-5 5" stroke="#000" strokeWidth="1.500" /></Glyph>
              </CloseButton>
            </BrowserTitle>
            <TreePane>
              <Tree role="tree">
                {nodes.map((n, i) => <TreeRow key={i} node={n} />)}
              </Tree>
            </TreePane>
            <ScrollH>
              <Arrow dir="left" />
              <Thumb $w={55} />
              <Spacer $grow={1} />
              <Arrow dir="right" />
            </ScrollH>
          </BrowserBody>
        </Browser>

        <ViewPane>
          <ViewRow>
            <Sheet><FloorPlan /></Sheet>
            <ScrollV>
              <Arrow dir="up" />
              <Spacer $grow={1} />
              <Thumb />
              <Spacer $grow={1} />
              <Arrow dir="down" />
            </ScrollV>
          </ViewRow>
          <ScrollH>
            <Arrow dir="left" />
            <Spacer $grow={365} />
            <Thumb />
            <Spacer $grow={311} />
            <Arrow dir="right" />
            <Corner />
          </ScrollH>
        </ViewPane>
      </Work>

      <StatusBar>
        <StatusText>Ready</StatusText>
        <StatusCell $w={18} />
        <StatusCell $w={21}>NUM</StatusCell>
        <StatusCell $w={20} />
      </StatusBar>
      <TaskBar>
        <StartButton><Icon name="flag" size={13} />Start</StartButton>
        <Grip />
        {["desktop", "ie", "mail", "media"].map((n) => (
          <QuickButton key={n} aria-label={n}><Icon name={n} /></QuickButton>
        ))}
        <QuickButton $w={12} aria-label="More">»</QuickButton>
        <Grip />
        <TaskButton $on $w={113}><Icon name="revit" />Revit - [tutorial.rvt -...</TaskButton>
        <TaskButton $w={112}><Icon name="photoshop" />Adobe Photoshop</TaskButton>
        <Tray>
          <Icon name="wand" />
          <Icon name="ball" />
          <Language>EN</Language>
          <Icon name="box" />
          <Icon name="globe" />
          <Clock>11:23 AM</Clock>
        </Tray>
      </TaskBar>
    </Desktop>
  );
}
